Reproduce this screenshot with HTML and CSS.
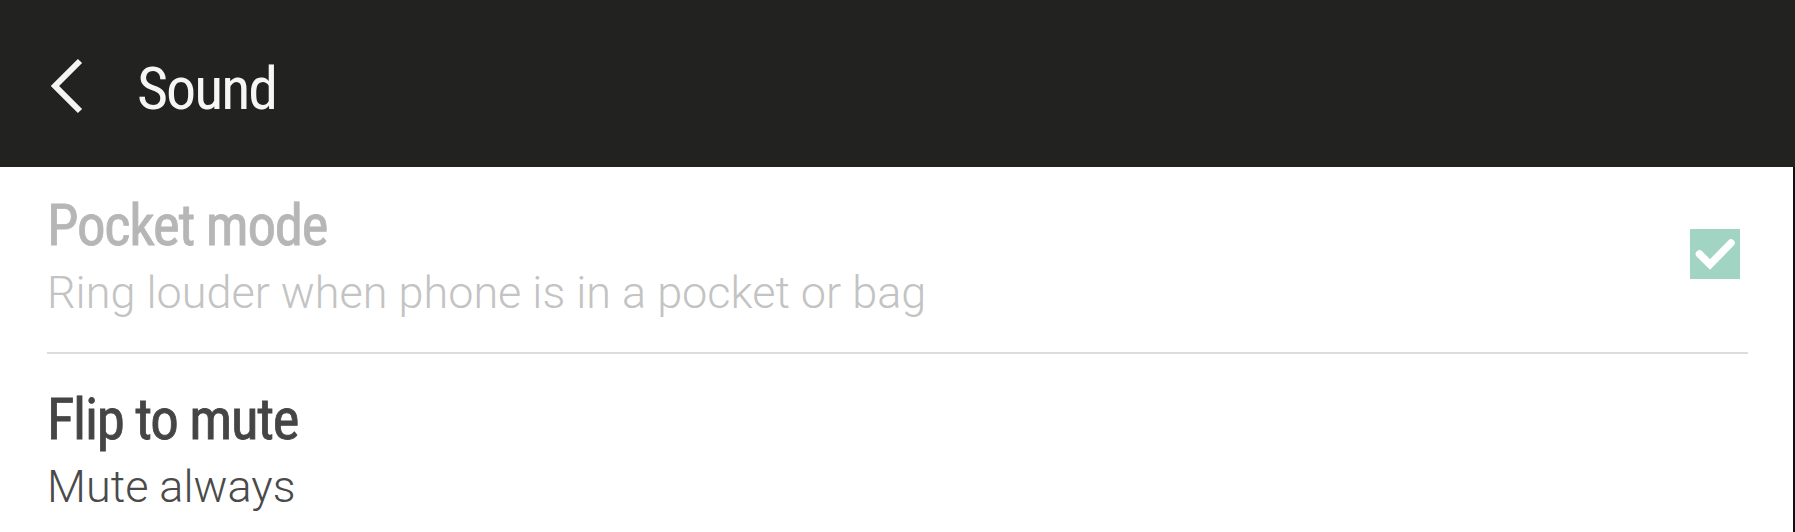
FILE: index.html
```html
<!DOCTYPE html>
<html lang="en">
<head>
<meta charset="utf-8">
<title>Sound</title>
<link rel="stylesheet" href="styles.css">
</head>
<body>
<header class="appbar">
  <svg class="back" width="40" height="64" viewBox="0 0 40 64" aria-hidden="true">
    <path d="M34 6 L9 31 L34 56" fill="none" stroke="#f4f4f4" stroke-width="6" stroke-linecap="butt"/>
  </svg>
  <h1 class="title">Sound</h1>
</header>
<main class="list">
  <div class="row disabled">
    <div class="texts">
      <div class="row-title">Pocket mode</div>
      <div class="row-sub">Ring louder when phone is in a pocket or bag</div>
    </div>
    <div class="check">
      <svg width="50" height="50" viewBox="0 0 50 50" aria-hidden="true">
        <path d="M9.5 25 L20 35.5 L41 14" fill="none" stroke="#ffffff" stroke-width="7.5" stroke-linecap="round" stroke-linejoin="miter"/>
      </svg>
    </div>
  </div>
  <div class="row second">
    <div class="texts">
      <div class="row-title">Flip to mute</div>
      <div class="row-sub">Mute always</div>
    </div>
  </div>
</main>
</body>
</html>
```
FILE: styles.css
```css
html, body {
  margin: 0;
  padding: 0;
  background: #ffffff;
}
body {
  width: 1795px;
  height: 532px;
  overflow: hidden;
  font-family: "Roboto Condensed", "Roboto", "Liberation Sans", sans-serif;
}
.appbar {
  height: 167px;
  background: #222321;
  display: flex;
  align-items: center;
  box-sizing: border-box;
  padding-left: 46px;
}
.back {
  display: block;
  margin-top: 6px;
}
.title {
  margin: 10px 0 0 51px;
  color: #f6f6f6;
  font-size: 60px;
  font-weight: 400;
  font-stretch: condensed;
  letter-spacing: -2px;
  line-height: 64px;
}
.list {
  height: 365px;
  border-right: 2px solid #111;
  box-sizing: border-box;
  padding: 0 45px 0 47px;
}
.row {
  display: flex;
  align-items: center;
  justify-content: space-between;
  padding: 27px 0 31px 0;
}
.row.disabled {
  border-bottom: 2px solid #dcdcdc;
}
.row.second {
  padding-top: 34px;
}
.texts {
  display: flex;
  flex-direction: column;
  gap: 7px;
}
.row-title {
  font-size: 57px;
  line-height: 64px;
  font-weight: 400;
  font-stretch: condensed;
  letter-spacing: -1.3px;
  -webkit-text-stroke: 0.8px currentColor;
  color: #454545;
}
.row-sub {
  font-family: "Roboto", "Liberation Sans", sans-serif;
  font-size: 45px;
  line-height: 56px;
  font-weight: 300;
  color: #4a4a4a;
}
.disabled .row-title {
  color: #b6b6b6;
}
.disabled .row-sub {
  color: #c3c3c3;
}
.check {
  width: 50px;
  height: 50px;
  background: #a1d4c2;
  margin-right: 8px;
  margin-top: -8px;
}
.check svg {
  display: block;
}
```
